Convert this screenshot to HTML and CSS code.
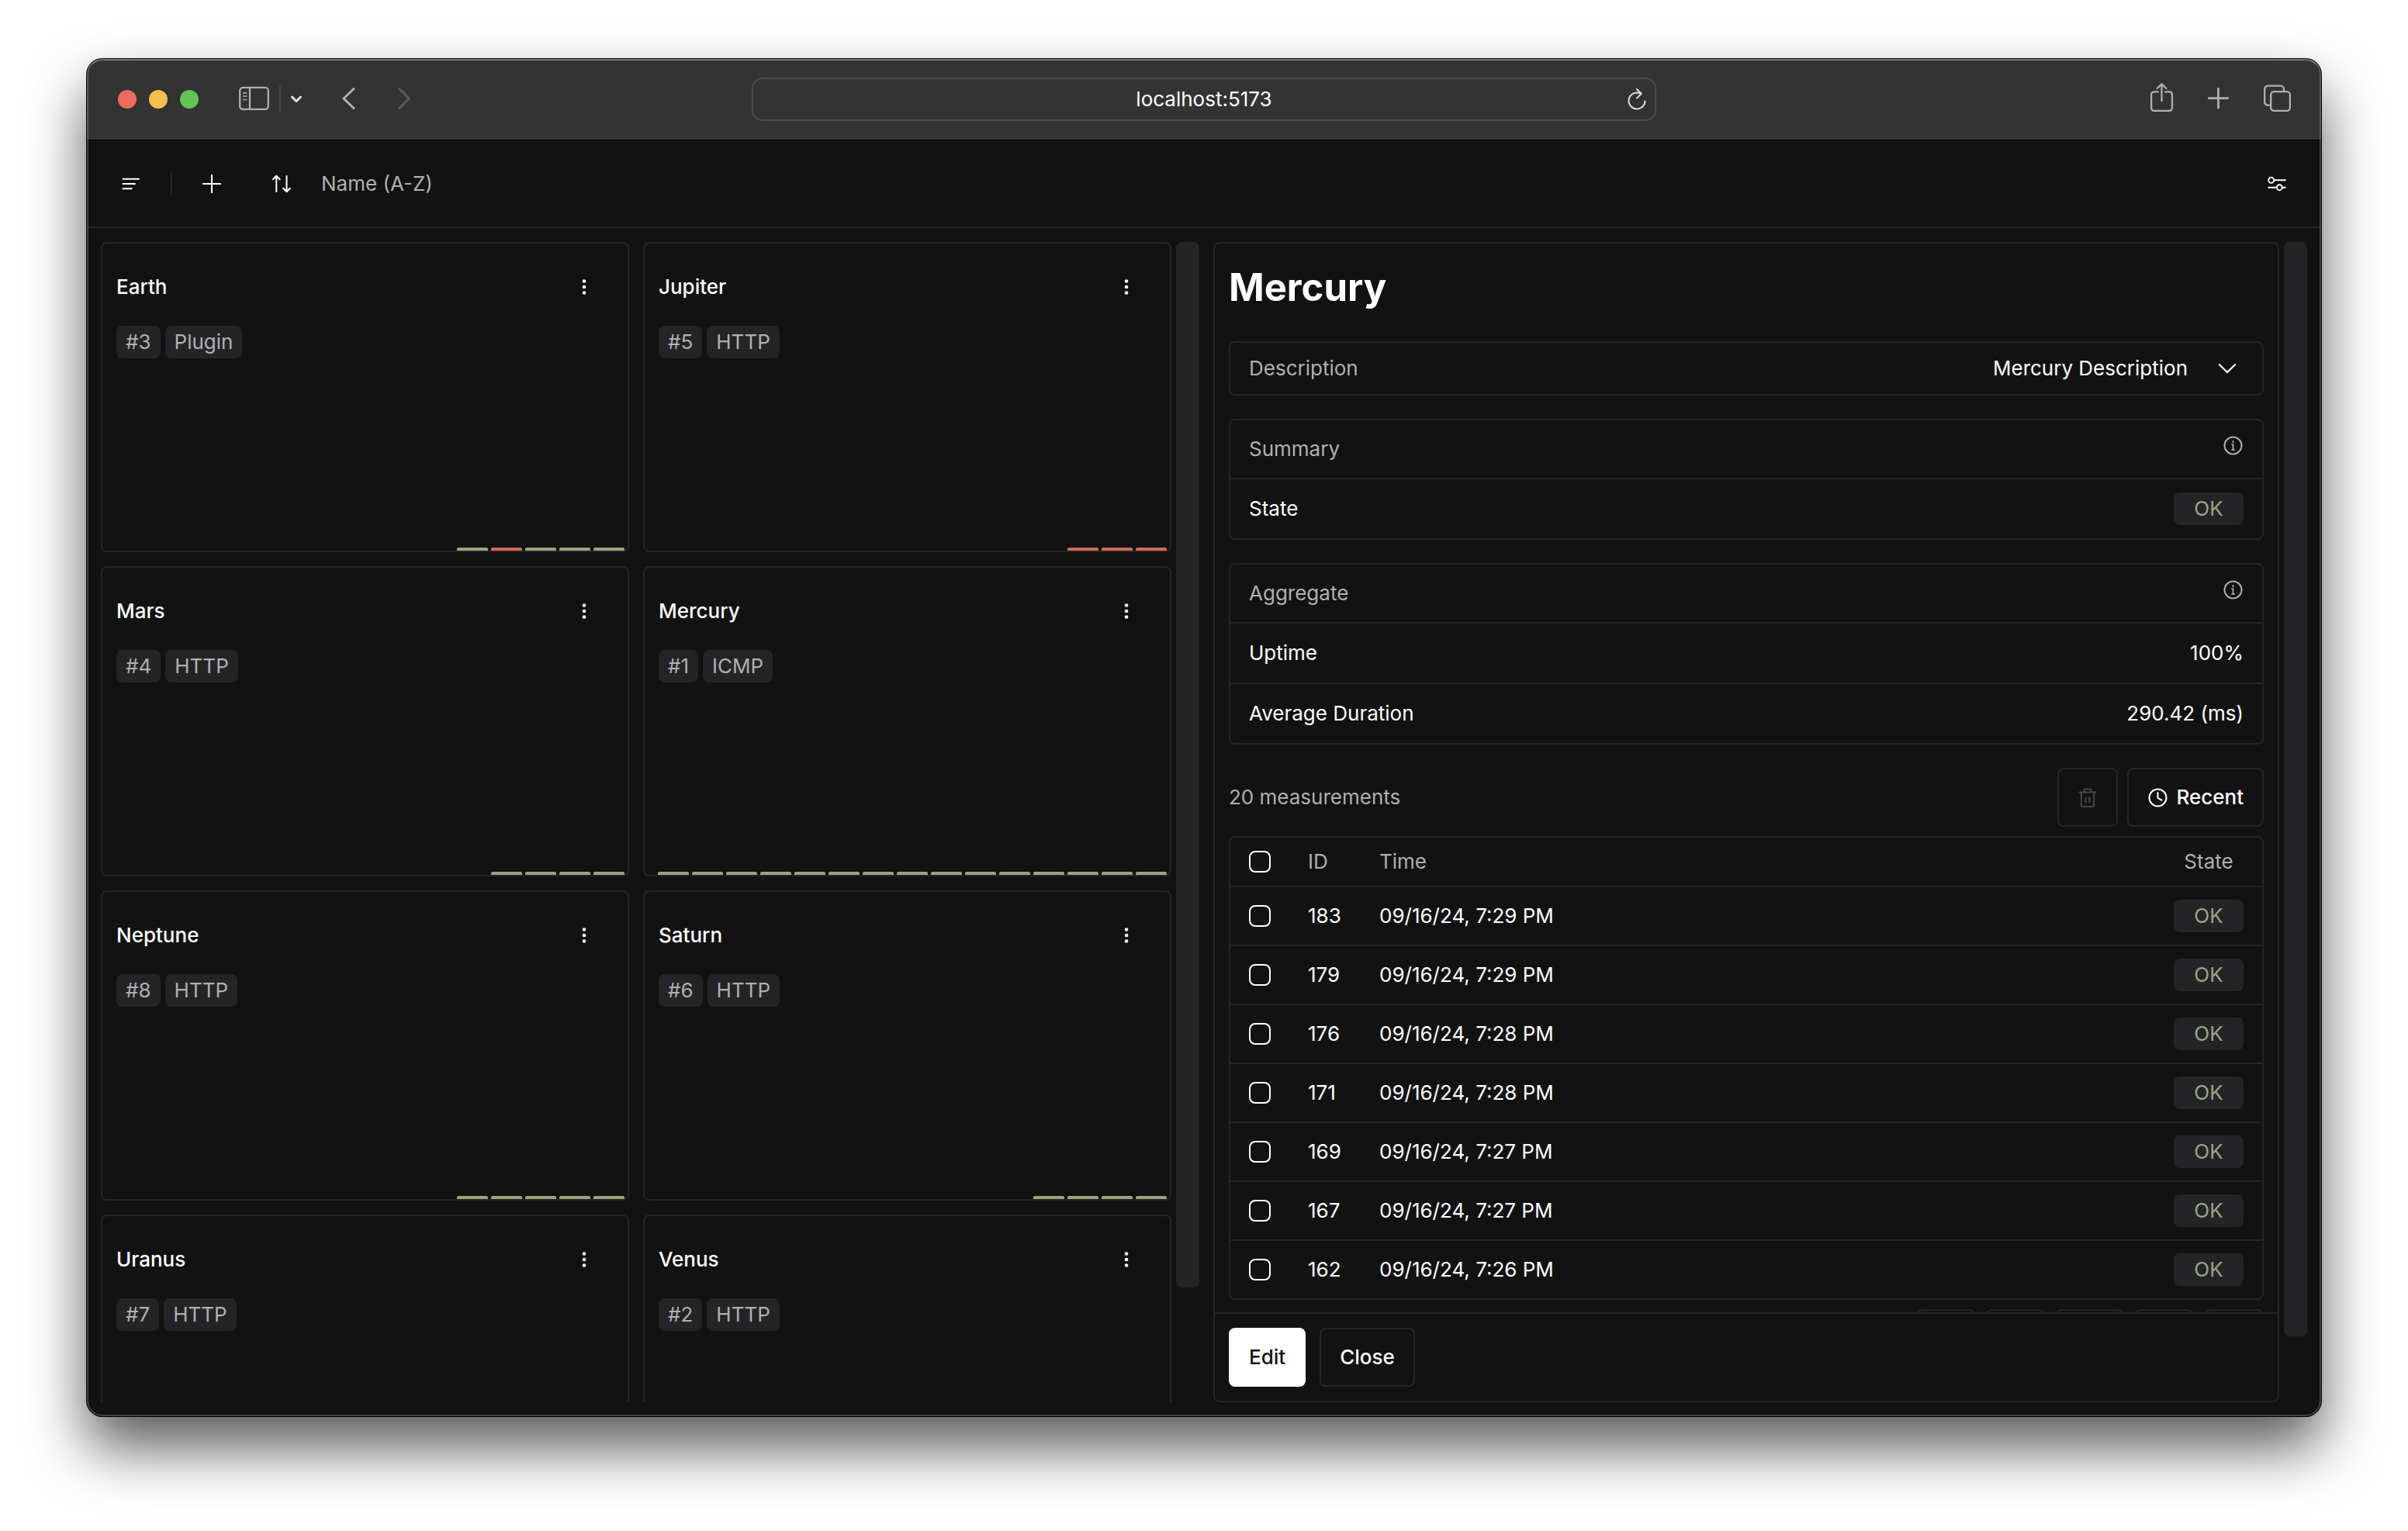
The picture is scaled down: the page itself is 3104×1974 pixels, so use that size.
FILE: index.html
```html
<!DOCTYPE html>
<html lang="en">
<head>
<meta charset="utf-8">
<title>Mercury</title>
<link rel="stylesheet" href="styles.css">
</head>
<body>
<svg class="sprite" aria-hidden="true">
  <symbol id="dots" viewBox="0 0 28 28"><g fill="currentColor"><circle cx="14" cy="6.5" r="2.3"/><circle cx="14" cy="14" r="2.3"/><circle cx="14" cy="21.5" r="2.3"/></g></symbol>
  <symbol id="info" viewBox="0 0 27 27"><circle cx="13.5" cy="13.5" r="11" fill="none" stroke="currentColor" stroke-width="2"/><path d="M13.5 7.4v2.4" stroke="currentColor" stroke-width="2.2"/><path d="M11.4 12.2h2.1v6.6M11.4 18.9h4.4" fill="none" stroke="currentColor" stroke-width="1.7"/></symbol>
</svg>
<div class="window">
  <header class="titlebar">
    <div class="titlebar-side">
      <div class="lights"><span class="light red"></span><span class="light yellow"></span><span class="light green"></span></div>
      <button class="chrome-btn sidebar-btn" aria-label="Sidebar"><svg width="40" height="40" viewBox="0 0 40 40" fill="none" stroke="currentColor" stroke-width="2.3"><rect x="1.2" y="4.8" width="36.6" height="28" rx="4"/><path d="M14 5v28"/><path stroke-width="1.7" d="M5 12h5.5M5 16h5.5M5 20.5h5.5"/></svg></button>
      <span class="chrome-rule"></span>
      <button class="chrome-btn bright menu-btn" aria-label="Tab groups"><svg width="20" height="40" viewBox="0 0 20 40" fill="none" stroke="currentColor" stroke-width="3" stroke-linecap="round" stroke-linejoin="round"><path d="M4.5 17l5.5 5.5 5.5-5.5"/></svg></button>
      <button class="chrome-btn back-btn" aria-label="Back"><svg width="40" height="40" viewBox="0 0 40 40" fill="none" stroke="currentColor" stroke-width="3" stroke-linecap="round" stroke-linejoin="round"><path d="M26 6.5L13 19l13 12.5"/></svg></button>
      <button class="chrome-btn dim forward-btn" aria-label="Forward"><svg width="40" height="40" viewBox="0 0 40 40" fill="none" stroke="currentColor" stroke-width="3" stroke-linecap="round" stroke-linejoin="round"><path d="M14.5 6.5l13 12.5-13 12.5"/></svg></button>
    </div>
    <div class="address">
      <input class="address-input" type="text" value="localhost:5173" aria-label="Address">
      <button class="chrome-btn bright" aria-label="Reload"><svg width="32" height="40" viewBox="0 0 32 40" fill="none" stroke="currentColor" stroke-width="2" stroke-linecap="round" stroke-linejoin="round"><path d="M21 12.7A10.5 10.5 0 1 0 26.5 22.4"/><path d="M16 7l5.8 5.8L16 18.6"/></svg></button>
    </div>
    <div class="titlebar-side right">
      <button class="chrome-btn" aria-label="Share"><svg width="40" height="40" viewBox="0 0 40 40" fill="none" stroke="currentColor" stroke-width="2.3" stroke-linecap="round" stroke-linejoin="round"><path d="M16 10.3h-5.3A3.6 3.6 0 0 0 7.1 14v17.3a3.6 3.6 0 0 0 3.6 3.6h19.7a3.6 3.6 0 0 0 3.6-3.6V14a3.6 3.6 0 0 0-3.6-3.7H25"/><path d="M20.5 22V.4M14.6 6L20.5.3 26.4 6"/></svg></button>
      <button class="chrome-btn" aria-label="New tab"><svg width="40" height="40" viewBox="0 0 40 40" fill="none" stroke="currentColor" stroke-width="2.8" stroke-linecap="round"><path d="M19.5 6.3v24.6M7.2 18.6h24.6"/></svg></button>
      <button class="chrome-btn" aria-label="Tab overview"><svg width="40" height="40" viewBox="0 0 40 40" fill="none" stroke="currentColor" stroke-width="2.3" stroke-linejoin="round"><path d="M13 27.6H9.4a4.2 4.2 0 0 1-4.2-4.2V6.8a4.2 4.2 0 0 1 4.2-4.2h16.4A4.2 4.2 0 0 1 30 6.8V10"/><rect x="13.2" y="10.2" width="24.7" height="24.7" rx="4.2"/></svg></button>
    </div>
  </header>

  <nav class="toolbar">
    <button class="tool" aria-label="Menu"><svg width="30" height="30" viewBox="0 0 30 30" stroke="currentColor" stroke-width="2" stroke-linecap="round"><path d="M4.5 8.8h20.6M4.5 15h15.6M4.5 21.2h11.2"/></svg></button>
    <span class="tool-rule"></span>
    <button class="tool" aria-label="Add"><svg width="30" height="30" viewBox="0 0 30 30" stroke="currentColor" stroke-width="2"><path d="M15 3v24M3 15h24"/></svg></button>
    <button class="tool" aria-label="Sort"><svg width="30" height="30" viewBox="0 0 30 30" fill="none" stroke="currentColor" stroke-width="2" stroke-linecap="round" stroke-linejoin="round"><path d="M8.3 25V5M4 9.2l4.3-4.4 4.3 4.4"/><path d="M21.5 5v20M17.2 20.8l4.3 4.4 4.3-4.4"/></svg></button>
    <span class="sort-name">Name (A-Z)</span>
    <button class="tool settings" aria-label="Settings"><svg width="30" height="30" viewBox="0 0 30 30" fill="none" stroke="currentColor" stroke-width="1.9"><circle cx="7.7" cy="10.3" r="3.5"/><path d="M11.2 10.3h15.4"/><circle cx="18.3" cy="19.7" r="3.5"/><path d="M3.4 19.7h11.4M21.8 19.7h4.8"/></svg></button>
  </nav>

  <main class="split">
    <section class="pane">
      <div class="cards">
        <article class="card"><div class="card-head"><h2>Earth</h2><button class="tool" aria-label="Earth actions"><svg width="28" height="28"><use href="#dots"/></svg></button></div><div class="tags"><span>#3</span><span>Plugin</span></div><div class="bars"><i></i><i class="bad"></i><i></i><i></i><i></i></div></article>
        <article class="card"><div class="card-head"><h2>Jupiter</h2><button class="tool" aria-label="Jupiter actions"><svg width="28" height="28"><use href="#dots"/></svg></button></div><div class="tags"><span>#5</span><span>HTTP</span></div><div class="bars"><i class="bad"></i><i class="bad"></i><i class="bad"></i></div></article>
        <article class="card"><div class="card-head"><h2>Mars</h2><button class="tool" aria-label="Mars actions"><svg width="28" height="28"><use href="#dots"/></svg></button></div><div class="tags"><span>#4</span><span>HTTP</span></div><div class="bars"><i></i><i></i><i></i><i></i></div></article>
        <article class="card"><div class="card-head"><h2>Mercury</h2><button class="tool" aria-label="Mercury actions"><svg width="28" height="28"><use href="#dots"/></svg></button></div><div class="tags"><span>#1</span><span>ICMP</span></div><div class="bars"><i></i><i></i><i></i><i></i><i></i><i></i><i></i><i></i><i></i><i></i><i></i><i></i><i></i><i></i><i></i></div></article>
        <article class="card"><div class="card-head"><h2>Neptune</h2><button class="tool" aria-label="Neptune actions"><svg width="28" height="28"><use href="#dots"/></svg></button></div><div class="tags"><span>#8</span><span>HTTP</span></div><div class="bars"><i></i><i></i><i></i><i></i><i></i></div></article>
        <article class="card"><div class="card-head"><h2>Saturn</h2><button class="tool" aria-label="Saturn actions"><svg width="28" height="28"><use href="#dots"/></svg></button></div><div class="tags"><span>#6</span><span>HTTP</span></div><div class="bars"><i></i><i></i><i></i><i></i></div></article>
        <article class="card"><div class="card-head"><h2>Uranus</h2><button class="tool" aria-label="Uranus actions"><svg width="28" height="28"><use href="#dots"/></svg></button></div><div class="tags"><span>#7</span><span>HTTP</span></div></article>
        <article class="card"><div class="card-head"><h2>Venus</h2><button class="tool" aria-label="Venus actions"><svg width="28" height="28"><use href="#dots"/></svg></button></div><div class="tags"><span>#2</span><span>HTTP</span></div></article>
      </div>
      <div class="rail"><div class="thumb" style="height:90.1%"></div></div>
    </section>

    <section class="pane">
      <div class="panel">
        <div class="panel-body">
          <h1>Mercury</h1>
          <button class="box description" aria-expanded="false"><span class="muted">Description</span><span class="description-value">Mercury Description</span><svg width="30" height="30" viewBox="0 0 30 30" fill="none" stroke="currentColor" stroke-width="2.1" stroke-linecap="round"><path d="M5 10.2l10 9.8 10-9.8"/></svg></button>
          <div class="box">
            <div class="row head"><span>Summary</span><svg width="27" height="27"><use href="#info"/></svg></div>
            <div class="row"><span>State</span><span class="state">OK</span></div>
          </div>
          <div class="box">
            <div class="row head"><span>Aggregate</span><svg width="27" height="27"><use href="#info"/></svg></div>
            <div class="row"><span>Uptime</span><span>100%</span></div>
            <div class="row"><span>Average Duration</span><span>290.42 (ms)</span></div>
          </div>
          <div class="measurements">
            <div class="measure-head">
              <span class="muted">20 measurements</span>
              <button class="btn trash" disabled aria-label="Delete"><svg width="26" height="28" viewBox="0 0 26 28" fill="none" stroke="currentColor" stroke-width="2" stroke-linejoin="round"><path d="M2 7.5h22M8.5 7V5a1.6 1.6 0 0 1 1.6-1.6h5.8A1.6 1.6 0 0 1 17.5 5v2M4.8 7.500v16.400a2 2 0 0 0 2 2h12.400a2 2 0 0 0 2-2V7.500M10.600 13.500v7.500M15.400 13.500v7.500"/></svg></button>
              <button class="btn recent"><svg width="27" height="27" viewBox="0 0 27 27" fill="none" stroke="currentColor" stroke-width="2"><circle cx="13.5" cy="13.5" r="11"/><path d="M13.5 7v6.8l5 2.800" stroke-linecap="round"/></svg>Recent</button>
            </div>
            <table class="box table">
              <thead><tr><th class="check"><input type="checkbox" aria-label="Select all"></th><th class="id">ID</th><th>Time</th><th class="status">State</th></tr></thead>
              <tbody>
                <tr><td><input type="checkbox" aria-label="Select 183"></td><td>183</td><td>09/16/24, 7:29 PM</td><td><span class="state">OK</span></td></tr>
                <tr><td><input type="checkbox" aria-label="Select 179"></td><td>179</td><td>09/16/24, 7:29 PM</td><td><span class="state">OK</span></td></tr>
                <tr><td><input type="checkbox" aria-label="Select 176"></td><td>176</td><td>09/16/24, 7:28 PM</td><td><span class="state">OK</span></td></tr>
                <tr><td><input type="checkbox" aria-label="Select 171"></td><td>171</td><td>09/16/24, 7:28 PM</td><td><span class="state">OK</span></td></tr>
                <tr><td><input type="checkbox" aria-label="Select 169"></td><td>169</td><td>09/16/24, 7:27 PM</td><td><span class="state">OK</span></td></tr>
                <tr><td><input type="checkbox" aria-label="Select 167"></td><td>167</td><td>09/16/24, 7:27 PM</td><td><span class="state">OK</span></td></tr>
                <tr><td><input type="checkbox" aria-label="Select 162"></td><td>162</td><td>09/16/24, 7:26 PM</td><td><span class="state">OK</span></td></tr>
              </tbody>
            </table>
            <div class="pager"><button class="btn" aria-label="First page"></button><button class="btn" aria-label="Previous page"></button><button class="btn wide" aria-label="Page"></button><button class="btn" aria-label="Next page"></button><button class="btn" aria-label="Last page"></button></div>
          </div>
        </div>
        <footer class="panel-foot"><button class="btn primary">Edit</button><button class="btn">Close</button></footer>
      </div>
      <div class="rail"><div class="thumb" style="height:94.3%"></div></div>
    </section>
  </main>
</div>
</body>
</html>
```
FILE: styles.css
```css
:root {
  --bg: #121212;
  --line: #252525;
  --chip: #242427;
  --muted: #b0b0b0;
  --ok: #98a680;
  --bad: #d16b5c;
}

* { box-sizing: border-box; }

body {
  margin: 0;
  height: 100vh;
  padding: 76px 112px 148px;
  display: flex;
  background: #fff;
  color: #fff;
  font: 400 26px/32px Inter, "Noto Sans", sans-serif;
}

h1, h2 { margin: 0; }
svg { display: block; overflow: visible; flex: none; }
.sprite { position: absolute; width: 0; height: 0; }
button { font: inherit; color: inherit; background: none; border: 0; padding: 0; }
.muted { color: var(--muted); }

/* Window frame */
.window {
  position: relative;
  flex: 1;
  min-width: 0;
  display: flex;
  flex-direction: column;
  overflow: hidden;
  border-radius: 20px;
  background: var(--bg);
  box-shadow: 0 0 0 1px #000, 0 40px 76px rgba(0, 0, 0, .65);
}
.window::after {
  content: "";
  position: absolute;
  inset: 0;
  border: 2px solid rgba(255, 255, 255, .2);
  border-top-color: rgba(255, 255, 255, .35);
  border-radius: 20px;
  pointer-events: none;
}

.titlebar {
  flex: none;
  height: 105px;
  display: grid;
  grid-template-columns: 857fr 1166fr 857fr;
  align-items: center;
  background: #333;
  border-bottom: 1px solid #000;
}
.titlebar-side { display: flex; align-items: center; padding: 0 38px 0 40px; }
.titlebar-side.right { justify-content: flex-end; gap: 34px; }
.lights { display: flex; gap: 16px; }
.light { width: 24px; height: 24px; border-radius: 50%; }
.red { background: #ec6a5e; }
.yellow { background: #f4bf4c; }
.green { background: #62c654; }
.chrome-btn { color: #b0b0b0; }
.bright { color: #e0e0e0; }
.dim { color: #5a5a5a; }
.sidebar-btn { margin-left: 52px; }
.chrome-rule { width: 2px; height: 36px; margin-left: 12px; background: #444; }
.menu-btn { margin-left: 10px; }
.back-btn { margin-left: 38px; }
.forward-btn { margin-left: 30px; }

.address {
  height: 56px;
  display: flex;
  align-items: center;
  padding: 0 7px 0 39px;
  border: 2px solid #4a4a4a;
  border-radius: 14px;
}
.address-input {
  flex: 1;
  min-width: 0;
  padding: 0;
  border: 0;
  outline: 0;
  background: none;
  color: #fff;
  font: inherit;
  text-align: center;
}

/* Toolbar */
.toolbar {
  flex: none;
  height: 113px;
  display: flex;
  align-items: center;
  gap: 12px;
  padding: 0 18px;
  border-bottom: 2px solid var(--line);
}
.tool { width: 78px; height: 76px; display: flex; align-items: center; justify-content: center; }
.tool-rule { width: 2px; height: 28px; background: var(--line); }
.sort-name { color: var(--muted); }
.settings { margin-left: auto; }

/* Split view */
.split {
  flex: 1;
  min-height: 0;
  display: grid;
  grid-template-columns: minmax(0, 236fr) minmax(0, 235fr);
  grid-template-rows: minmax(0, 1fr);
  gap: 18px;
  padding: 18px;
}
.pane { display: flex; gap: 6px; min-height: 0; }
.rail { flex: none; width: 30px; }
.thumb { border-radius: 8px; background: var(--chip); }

.cards {
  flex: 1;
  display: grid;
  grid-template-columns: 1fr 1fr;
  grid-auto-rows: 400px;
  gap: 18px;
  overflow: hidden;
}
.card {
  display: flex;
  flex-direction: column;
  padding: 18px 0 0;
  border: 2px solid var(--line);
  border-radius: 8px;
}
.card-head { display: flex; align-items: center; justify-content: space-between; padding: 0 17px 0 18px; }
.card h2 { font-size: 26px; line-height: 32px; font-weight: 500; }
.tags { display: flex; gap: 6px; padding: 12px 18px; }
.tags span {
  padding: 5px 12px;
  border-radius: 8px;
  background: var(--chip);
  color: var(--muted);
}
.bars { display: flex; justify-content: flex-end; gap: 4px; margin-top: auto; padding: 0 4px; }
.bars i { width: 40px; height: 4px; border-radius: 2px 2px 0 0; background: var(--ok); }
.bars .bad { background: var(--bad); }

/* Detail panel */
.panel {
  flex: 1;
  min-width: 0;
  display: flex;
  flex-direction: column;
  border: 2px solid var(--line);
  border-radius: 8px;
}
.panel-body {
  flex: 1;
  min-height: 0;
  overflow: hidden;
  display: flex;
  flex-direction: column;
  gap: 30px;
  padding: 18px;
}
.panel-body > * { flex: none; }
h1 { font-size: 49px; line-height: 78px; font-weight: 700; }
.box { border: 2px solid var(--line); border-radius: 8px; }
.description { display: flex; align-items: center; height: 70px; padding: 0 30px 0 24px; }
.description-value { margin: 0 36px 0 auto; }
.row {
  height: 78px;
  display: flex;
  align-items: center;
  justify-content: space-between;
  padding: 0 24px;
  border-top: 2px solid var(--line);
}
.row.head {
  height: 74px;
  align-items: baseline;
  padding: 19px 24px;
  border-top: 0;
  color: var(--muted);
}
.state {
  display: block;
  width: 90px;
  padding: 5px 0;
  border-radius: 8px;
  background: var(--chip);
  color: var(--ok);
  text-align: center;
}

.measurements { display: flex; flex-direction: column; gap: 12px; }
.measure-head { display: flex; align-items: center; gap: 12px; }
.measure-head .muted { margin-right: auto; }
.btn {
  height: 76px;
  display: flex;
  align-items: center;
  justify-content: center;
  gap: 12px;
  padding: 0 24px;
  border: 2px solid var(--line);
  border-radius: 8px;
  font-weight: 500;
}
.recent { gap: 10px; }
.trash { color: #484848; }
.primary { background: #fff; border-color: #fff; color: #121212; }

.table { width: 100%; border-spacing: 0; table-layout: fixed; }
.table th, .table td { height: 76px; padding: 0 0 0 24px; text-align: left; font-weight: 400; }
.table th { height: 62px; color: var(--muted); }
.table td { border-top: 2px solid var(--line); }
.table .check { width: 76px; }
.table .id { width: 92px; }
.table .status { width: 138px; padding-right: 24px; text-align: center; }
input[type="checkbox"] {
  appearance: none;
  display: block;
  width: 28px;
  height: 28px;
  margin: 0;
  border: 2px solid #fff;
  border-radius: 8px;
}

.pager { display: flex; justify-content: flex-end; gap: 14px; }
.pager .btn { width: 76px; }
.pager .wide { width: 88px; }

.panel-foot {
  flex: none;
  display: flex;
  gap: 18px;
  padding: 18px;
  border-top: 2px solid var(--line);
}
```
